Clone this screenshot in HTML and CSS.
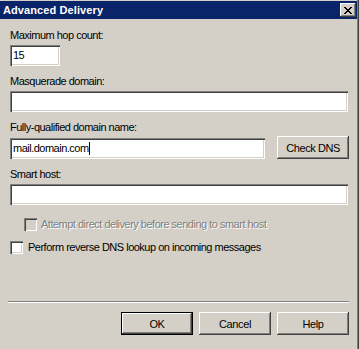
FILE: index.html
```html
<!DOCTYPE html>
<html lang="en">
<head>
    <meta charset="UTF-8">
    <title>Advanced Delivery</title>
    <link rel="stylesheet" href="styles.css">
</head>
<body>
    <div class="window">
        <div class="titlebar">
            <span class="title">Advanced Delivery</span>
            <button class="close-btn" title="Close">
                <svg width="8" height="7" viewBox="0 0 8 7">
                    <path d="M0 0h2v1h1v1h2V1h1V0h2v1H7v1H6v1H5v1h1v1h1v1h1v1H6V6H5V5H3v1H2v1H0V6h1V5h1V4h1V3H2V2H1V1H0z" fill="#000"/>
                </svg>
            </button>
        </div>

        <div class="content">
            <label class="field-label lbl-hop">Maximum hop count:</label>
            <div class="textbox hop">15</div>

            <label class="field-label lbl-masq">Masquerade domain:</label>
            <div class="textbox full"></div>

            <label class="field-label lbl-fqdn">Fully-qualified domain name:</label>
            <div class="row">
                <div class="textbox fqdn">mail.domain.com<span class="caret"></span></div>
                <button class="win-btn">Check DNS</button>
            </div>

            <label class="field-label lbl-smart">Smart host:</label>
            <div class="textbox full"></div>

            <div class="check disabled indent">
                <span class="box"></span>
                <span>Attempt direct delivery before sending to smart host</span>
            </div>
            <div class="check reverse">
                <span class="box"></span>
                <span>Perform reverse DNS lookup on incoming messages</span>
            </div>

            <div class="separator"></div>

            <div class="buttons">
                <button class="win-btn default">OK</button>
                <button class="win-btn">Cancel</button>
                <button class="win-btn">Help</button>
            </div>
        </div>
    </div>
</body>
</html>
```

FILE: styles.css
```css
body {
    margin: 0;
    font-family: "Liberation Sans", Arial, sans-serif;
    font-size: 11px;
    letter-spacing: -0.5px;
    background: #d4d0c8;
}

.window {
    width: 357px;
    height: 348px;
    background: #d4d0c8;
    border-top: 1px solid #d4d0c8;
    box-shadow: 1px 0 0 #808080, 2px 0 0 #404040;
}

.titlebar {
    height: 18px;
    background: #0a246a;
    color: #fff;
    display: flex;
    align-items: center;
    justify-content: space-between;
    padding: 0 1px 0 3px;
}

.title {
    font-weight: bold;
    font-size: 11px;
    letter-spacing: 0.1px;
}

.close-btn {
    width: 16px;
    height: 14px;
    padding: 0;
    border: none;
    background: #d4d0c8;
    box-shadow: inset -1px -1px #404040, inset 1px 1px #fff, inset -2px -2px #808080;
    display: flex;
    align-items: center;
    justify-content: center;
}

.content {
    padding: 0 9px 0 10px;
    display: flex;
    flex-direction: column;
    align-items: flex-start;
}

.field-label {
    display: block;
    line-height: 13px;
    color: #000;
}

.lbl-hop { margin-top: 10px; }
.lbl-masq { margin-top: 9px; }
.lbl-fqdn { margin-top: 9px; }
.lbl-smart { margin-top: 9px; }

.textbox {
    box-sizing: border-box;
    height: 21px;
    margin-top: 3px;
    background: #fff;
    box-shadow: inset 1px 1px #808080, inset 2px 2px #404040, inset -1px -1px #fff, inset -2px -2px #d4d0c8;
    padding: 4px 3px 0;
    line-height: 13px;
    color: #000;
    white-space: nowrap;
}

.textbox.hop { width: 50px; }
.textbox.full { width: 338px; }

.row {
    display: flex;
    align-items: center;
    gap: 12px;
    width: 339px;
}

.textbox.fqdn {
    width: 256px;
    margin-top: 3px;
}

.caret {
    display: inline-block;
    width: 1px;
    height: 13px;
    background: #000;
    vertical-align: top;
}

.win-btn {
    box-sizing: border-box;
    width: 72px;
    height: 23px;
    padding: 0;
    border: none;
    background: #d4d0c8;
    font-family: "Liberation Sans", Arial, sans-serif;
    font-size: 11px;
    letter-spacing: -0.4px;
    color: #000;
    box-shadow: inset -1px -1px #404040, inset 1px 1px #fff, inset -2px -2px #808080;
}

.row .win-btn { margin-top: 2px; }

.win-btn.default {
    box-shadow: inset 0 0 0 1px #000, inset -2px -2px #404040, inset 2px 2px #fff, inset -3px -3px #808080;
}

.check {
    display: flex;
    align-items: center;
    gap: 6px;
    line-height: 13px;
    color: #000;
}

.check .box {
    box-sizing: border-box;
    width: 13px;
    height: 13px;
    background: #fff;
    box-shadow: inset 1px 1px #808080, inset 2px 2px #404040, inset -1px -1px #fff, inset -2px -2px #d4d0c8;
}

.check.indent {
    margin-top: 13px;
    margin-left: 14px;
    gap: 4px;
}

.check.disabled {
    color: #808080;
    text-shadow: 1px 1px 0 #fff;
}

.check.disabled .box {
    background: #d4d0c8;
}

.check.reverse {
    margin-top: 10px;
    gap: 5px;
}

.separator {
    width: 341px;
    height: 1px;
    margin-left: -2px;
    margin-top: 47px;
    background: #808080;
    border-bottom: 1px solid #fff;
}

.buttons {
    display: flex;
    gap: 6px;
    margin-top: 9px;
    align-self: flex-end;
    margin-right: -1px;
}
```
